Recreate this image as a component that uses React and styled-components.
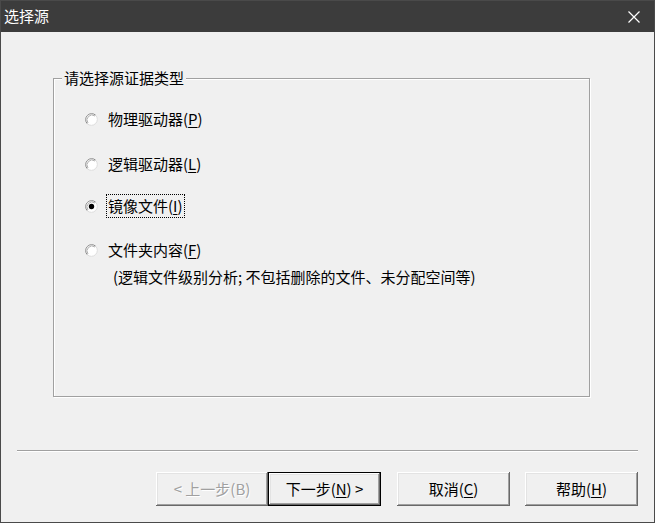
import React from "react";
import styled, { createGlobalStyle } from "styled-components";

const Global = createGlobalStyle`
  html, body { margin: 0; padding: 0; background: #f0f0f0; }
  body { font-family: "Noto Sans CJK SC", "Microsoft YaHei", sans-serif; }
  * { box-sizing: border-box; }
`;

const Window = styled.div`
  width: 655px;
  height: 523px;
  border: 1px solid #4a4a4a;
  background: #f0f0f0;
  display: flex;
  flex-direction: column;
  font-family: "Noto Sans CJK SC", sans-serif;
  font-size: 15px;
  color: #000;
`;

const TitleBar = styled.div`
  height: 31px;
  background: #3c3c3c;
  display: flex;
  align-items: center;
  justify-content: space-between;
  padding: 0 14px 0 3px;
  flex-shrink: 0;
`;

const Title = styled.div`
  color: #fff;
  font-size: 15px;
  line-height: 20px;
  margin-top: -1px;
`;

const Close = styled.div`
  width: 12px;
  height: 12px;
  display: flex;
  margin-top: 1px;
`;

const Body = styled.div`
  flex: 1;
  display: flex;
  flex-direction: column;
`;

const Group = styled.div`
  position: relative;
  margin: 46px 64px 0 52px;
  height: 319px;
  border: 1px solid #a0a0a0;
  box-shadow: 1px 1px 0 #fff, inset 1px 1px 0 #fff;
  padding: 28px 0 0 31px;
  display: flex;
  flex-direction: column;
`;

const Legend = styled.div`
  position: absolute;
  top: -13px;
  left: 8px;
  padding: 0 2px;
  background: #f0f0f0;
  line-height: 24px;
`;

const Row = styled.div`
  display: flex;
  align-items: center;
  height: 24px;
  margin-top: ${(p) => p.$gap || 0}px;
`;

const RadioBox = styled.div`
  width: 13px;
  height: 13px;
  display: flex;
  flex-shrink: 0;
`;

const Label = styled.span`
  margin-left: 8px;
  padding: 0 1px;
  line-height: 22px;
  height: 24px;
  border: 1px dotted ${(p) => (p.$focused ? "#000" : "transparent")};
  white-space: nowrap;
`;

const Note = styled.div`
  margin: 3px 0 0 28px;
  line-height: 24px;
  white-space: nowrap;
`;

const Separator = styled.div`
  margin: 53px 16px 0 16px;
  height: 2px;
  border-top: 1px solid #a0a0a0;
  border-bottom: 1px solid #fff;
`;

const ButtonBar = styled.div`
  display: flex;
  justify-content: flex-end;
  margin: 20px 16px 0 0;
`;

const Button = styled.button`
  width: ${(p) => p.$w || 113}px;
  height: 34px;
  margin-left: ${(p) => p.$gap || 0}px;
  border: none;
  padding: 0;
  background: #f0f0f0;
  font-family: "Noto Sans CJK SC", sans-serif;
  font-size: 15px;
  line-height: 20px;
  color: ${(p) => (p.disabled ? "#a0a0a0" : "#000")};
  text-shadow: ${(p) => (p.disabled ? "1px 1px 0 #fff" : "none")};
  box-shadow: ${(p) =>
    p.$default
      ? "inset 0 0 0 1px #000, inset -2px -2px 0 #696969, inset 2px 2px 0 #fff, inset -3px -3px 0 #a0a0a0, inset 3px 3px 0 #e3e3e3"
      : "inset -1px -1px 0 #696969, inset 1px 1px 0 #fff, inset -2px -2px 0 #a0a0a0, inset 2px 2px 0 #e3e3e3"};
  display: flex;
  align-items: center;
  justify-content: center;
  white-space: pre;
`;

const Mn = styled.u`
  text-decoration: underline;
  text-underline-offset: 2px;
`;

function Radio({ checked }) {
  return (
    <RadioBox>
      <svg width="13" height="13" viewBox="0 0 13 13">
        <circle cx="6.5" cy="6.5" r="6" fill="#fff" />
        <path d="M2.26 10.74 A6 6 0 0 1 10.74 2.26" fill="none" stroke="#8a8a8a" strokeWidth="1" />
        <path d="M10.74 2.26 A6 6 0 0 1 2.26 10.74" fill="none" stroke="#dcdcdc" strokeWidth="1" />
        <path d="M3.0 10.0 A5 5 0 0 1 10.0 3.0" fill="none" stroke="#b0b0b0" strokeWidth="1" />
        {checked && <circle cx="6.5" cy="6.5" r="2.7" fill="#000" />}
      </svg>
    </RadioBox>
  );
}

export default function App() {
  return (
    <>
      <Global />
      <Window>
        <TitleBar>
          <Title>选择源</Title>
          <Close>
            <svg width="12" height="12" viewBox="0 0 12 12">
              <path d="M0.5 0.5 L11.5 11.5 M11.5 0.5 L0.5 11.5" stroke="#fff" strokeWidth="1.2" />
            </svg>
          </Close>
        </TitleBar>
        <Body>
          <Group>
            <Legend>请选择源证据类型</Legend>
            <Row>
              <Radio />
              <Label>物理驱动器(<Mn>P</Mn>)</Label>
            </Row>
            <Row $gap={21}>
              <Radio />
              <Label>逻辑驱动器(<Mn>L</Mn>)</Label>
            </Row>
            <Row $gap={18}>
              <Radio checked />
              <Label $focused>镜像文件(<Mn>I</Mn>)</Label>
            </Row>
            <Row $gap={20}>
              <Radio />
              <Label>文件夹内容(<Mn>F</Mn>)</Label>
            </Row>
            <Note>(逻辑文件级别分析; 不包括删除的文件、未分配空间等)</Note>
          </Group>
          <Separator />
          <ButtonBar>
            <Button disabled $w={112}>{"< 上一步(B)"}</Button>
            <Button $default>下一步(<Mn>N</Mn>) &gt;</Button>
            <Button $gap={16}>取消(<Mn>C</Mn>)</Button>
            <Button $gap={15}>帮助(<Mn>H</Mn>)</Button>
          </ButtonBar>
        </Body>
      </Window>
    </>
  );
}
